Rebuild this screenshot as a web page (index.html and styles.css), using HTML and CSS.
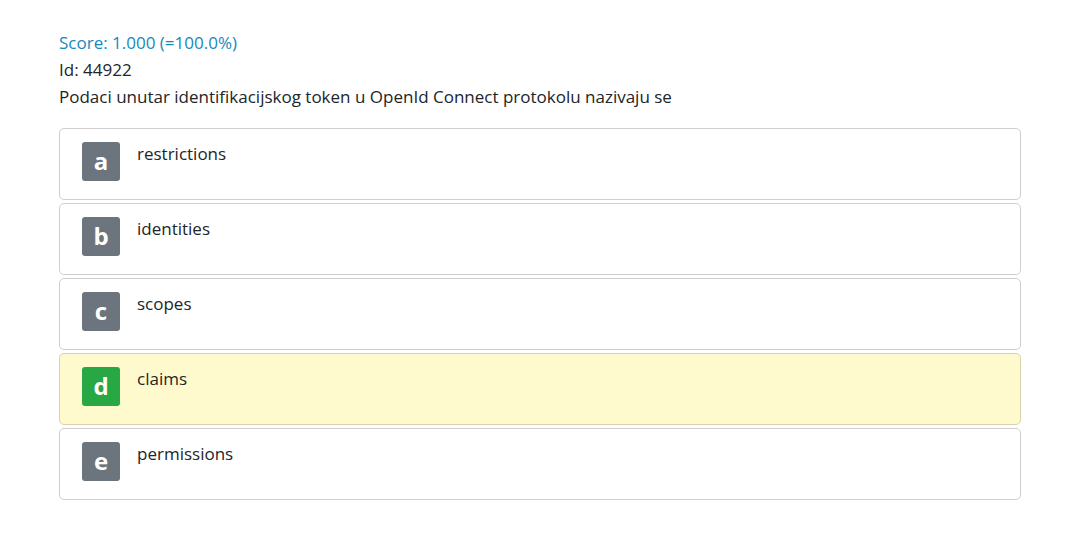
FILE: index.html
```html
<!DOCTYPE html>
<html lang="hr">
<head>
<meta charset="utf-8">
<title>Quiz</title>
<link rel="stylesheet" href="styles.css">
</head>
<body>
<main class="page">
  <div class="score">Score: 1.000 (=100.0%)</div>
  <div class="meta">Id: 44922</div>
  <div class="question">Podaci unutar identifikacijskog token u OpenId Connect protokolu nazivaju se</div>
  <ul class="answers">
    <li class="answer"><span class="badge">a</span><span class="label">restrictions</span></li>
    <li class="answer"><span class="badge">b</span><span class="label">identities</span></li>
    <li class="answer"><span class="badge">c</span><span class="label">scopes</span></li>
    <li class="answer correct"><span class="badge">d</span><span class="label">claims</span></li>
    <li class="answer"><span class="badge">e</span><span class="label">permissions</span></li>
  </ul>
</main>
</body>
</html>
```
FILE: styles.css
```css
html, body {
  margin: 0;
  padding: 0;
  background: #fff;
}
body {
  font-family: "Open Sans", "Noto Sans", sans-serif;
  font-size: 17px;
  color: #212529;
}
.page {
  padding: 29px 59px 0 59px;
}
.score, .meta, .question {
  line-height: 27px;
}
.score {
  color: #1788bd;
}
.answers {
  list-style: none;
  margin: 18px 0 0 0;
  padding: 0;
  display: flex;
  flex-direction: column;
  gap: 3px;
}
.answer {
  display: flex;
  align-items: flex-start;
  box-sizing: border-box;
  height: 72px;
  padding: 13px 22px;
  border: 1px solid #cfcfcf;
  border-radius: 5px;
  background: #fff;
}
.answer.correct {
  background: #fffacd;
  border-color: #d6d3a8;
}
.badge {
  width: 38px;
  height: 39px;
  border-radius: 3px;
  background: #6c757d;
  color: #fff;
  font-weight: 700;
  font-size: 24px;
  line-height: 38px;
  text-align: center;
  flex: none;
}
.correct .badge {
  background: #28a745;
}
.label {
  margin-left: 17px;
  line-height: 24px;
  padding-top: 0;
}
```
